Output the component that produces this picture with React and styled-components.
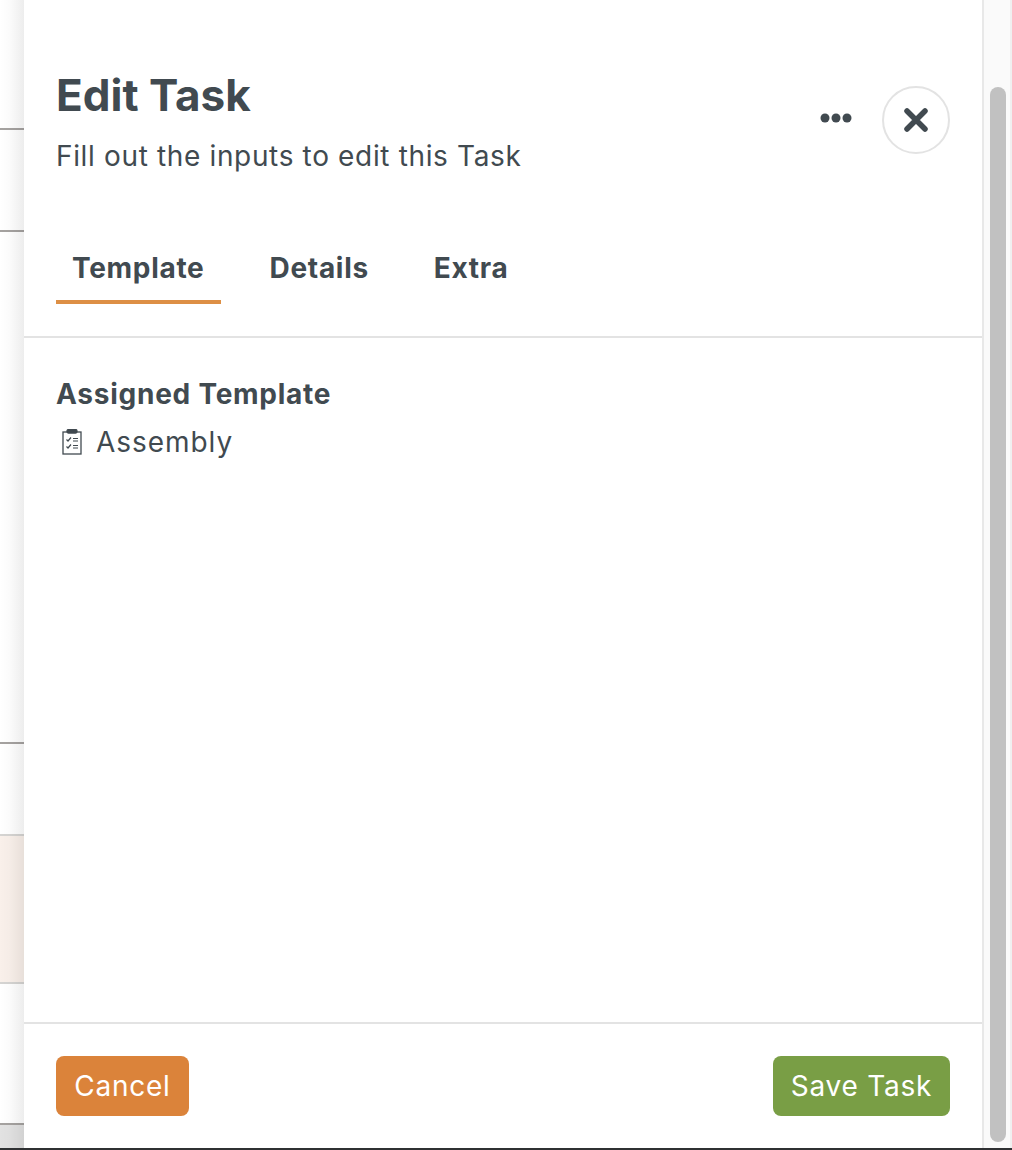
import React from "react";
import styled, { createGlobalStyle } from "styled-components";

const Global = createGlobalStyle`
  html, body { margin: 0; padding: 0; background: #fff; }
  body { font-family: Inter, Lato, "Liberation Sans", sans-serif; color: #414a50; }
  #root { height: 1150px; overflow: hidden; }
`;

const Page = styled.div`
  display: flex;
  flex-direction: column;
  width: 1012px;
  height: 1150px;
`;
const Workspace = styled.div`
  display: flex;
  flex: 1;
  min-height: 0;
`;
const StatusLine = styled.div`
  height: 2px;
  background: #2f3133;
`;
const Backdrop = styled.div`
  position: relative;
  width: 24px;
  display: flex;
  flex-direction: column;
`;
const Fade = styled.div`
  position: absolute;
  inset: 0;
  background: linear-gradient(to right, rgba(0,0,0,0) 0%, rgba(0,0,0,0.015) 40%, rgba(0,0,0,0.07) 100%);
  pointer-events: none;
`;
const BackRow = styled.div`
  height: ${p => p.$h}px;
  flex: ${p => (p.$fill ? 1 : "none")};
  box-sizing: border-box;
  background: ${p => p.$bg || "#ffffff"};
  border-bottom: 2px solid ${p => p.$line || "transparent"};
`;
const Panel = styled.div`
  width: 958px;
  display: flex;
  flex-direction: column;
  background: #fff;
`;
const Header = styled.header`
  height: 203px;
  box-sizing: border-box;
  padding: 68px 32px 0;
  display: flex;
  justify-content: space-between;
  align-items: flex-start;
`;
const TitleBlock = styled.div`
  display: flex;
  flex-direction: column;
  gap: 16px;
`;
const Title = styled.h1`
  margin: 0;
  font-size: 44px;
  line-height: 54px;
  font-weight: 700;
  color: #414a50;
`;
const Subtitle = styled.p`
  margin: 0;
  font-size: 28px;
  line-height: 36px;
  font-weight: 400;
  letter-spacing: 0.65px;
  color: #414a50;
`;
const Actions = styled.div`
  display: flex;
  align-items: center;
  gap: 30px;
  margin-top: 18px;
`;
const IconButton = styled.button`
  border: none;
  background: none;
  padding: 0 0 4px;
  display: flex;
  align-items: center;
  justify-content: center;
`;
const CloseButton = styled(IconButton)`
  width: 68px;
  height: 68px;
  padding: 0;
  box-sizing: border-box;
  border: 2px solid #e3e3e3;
  border-radius: 50%;
`;
const Tabs = styled.nav`
  height: 135px;
  box-sizing: border-box;
  padding: 0 32px;
  display: flex;
  gap: 33px;
  border-bottom: 2px solid #e3e3e3;
`;
const Tab = styled.div`
  height: 101px;
  box-sizing: border-box;
  padding: 0 16px 15px;
  display: flex;
  align-items: flex-end;
  font-size: 28px;
  font-weight: 700;
  letter-spacing: 0.7px;
  color: #414a50;
  border-bottom: 4px solid ${p => (p.$active ? "#dd8f45" : "transparent")};
`;
const Body = styled.section`
  flex: 1;
  padding: 36px 32px 0;
`;
const FieldLabel = styled.div`
  font-size: 28px;
  line-height: 40px;
  font-weight: 700;
  letter-spacing: 0.75px;
`;
const FieldValue = styled.div`
  display: flex;
  align-items: center;
  gap: 14px;
  margin-top: 8px;
  font-size: 28px;
  line-height: 40px;
  letter-spacing: 0.95px;
  padding-left: 6px;
`;
const Footer = styled.footer`
  height: 126px;
  box-sizing: border-box;
  padding: 32px 32px 0;
  display: flex;
  justify-content: space-between;
  align-items: flex-start;
  border-top: 2px solid #e3e3e3;
`;
const Button = styled.button`
  height: 60px;
  padding: 0;
  width: ${p => p.$w}px;
  border: none;
  border-radius: 8px;
  background: ${p => p.$bg};
  color: #fff;
  font: 400 28px Inter, Lato, sans-serif;
  letter-spacing: 0.75px;
`;
const Track = styled.div`
  width: 30px;
  box-sizing: border-box;
  background: #fafafa;
  border-left: 2px solid #e8e8e8;
  border-right: 2px solid #f0f0f0;
  padding: 87px 4px 6px 6px;
  display: flex;
`;
const Thumb = styled.div`
  flex: 1;
  background: #c1c1c1;
  border-radius: 8px;
`;

export default function App() {
  return (
    <Page>
      <Global />
      <Workspace>
        <Backdrop>
          <BackRow $h={130} $line="#a5a2a0" />
          <BackRow $h={102} $line="#a5a2a0" />
          <BackRow $h={512} $line="#a5a2a0" />
          <BackRow $h={92} $line="#d5d4d2" />
          <BackRow $h={148} $bg="#f9f0ea" $line="#d5d4d2" />
          <BackRow $h={141} $line="#a5a2a0" />
          <BackRow $fill $bg="#e2e2e2" />
          <Fade />
        </Backdrop>
        <Panel>
          <Header>
            <TitleBlock>
              <Title>Edit Task</Title>
              <Subtitle>Fill out the inputs to edit this Task</Subtitle>
            </TitleBlock>
            <Actions>
              <IconButton aria-label="More">
                <svg width="32" height="12" viewBox="0 0 32 12" fill="#414a50">
                  <circle cx="5" cy="6" r="4.5" />
                  <circle cx="16" cy="6" r="4.5" />
                  <circle cx="27" cy="6" r="4.5" />
                </svg>
              </IconButton>
              <CloseButton aria-label="Close">
                <svg width="24" height="24" viewBox="0 0 24 24" fill="none" stroke="#414a50" strokeWidth="5.5" strokeLinecap="round">
                  <path d="M3 3 L21 21 M21 3 L3 21" />
                </svg>
              </CloseButton>
            </Actions>
          </Header>
          <Tabs>
            <Tab $active>Template</Tab>
            <Tab>Details</Tab>
            <Tab>Extra</Tab>
          </Tabs>
          <Body>
            <FieldLabel>Assigned Template</FieldLabel>
            <FieldValue>
              <svg width="20" height="26" viewBox="0 0 20 26" fill="none" stroke="#414a50" strokeWidth="1.3">
                <rect x="1" y="3" width="18" height="22" />
                <rect x="5" y="0.5" width="10" height="3.5" fill="#414a50" rx="1.5" />
                <path d="M4.5 10.5 l1.5 1.5 l3 -3.5 M4.5 17.5 l1.5 1.5 l3 -3.5" strokeWidth="1.2" />
                <path d="M11 9.5 h5 M11 12 h5 M11 16.5 h5 M11 19 h5" strokeWidth="1.1" />
              </svg>
              Assembly
            </FieldValue>
          </Body>
          <Footer>
            <Button $bg="#db833a" $w={133}>Cancel</Button>
            <Button $bg="#799e45" $w={177}>Save Task</Button>
          </Footer>
        </Panel>
        <Track><Thumb /></Track>
      </Workspace>
      <StatusLine />
    </Page>
  );
}
